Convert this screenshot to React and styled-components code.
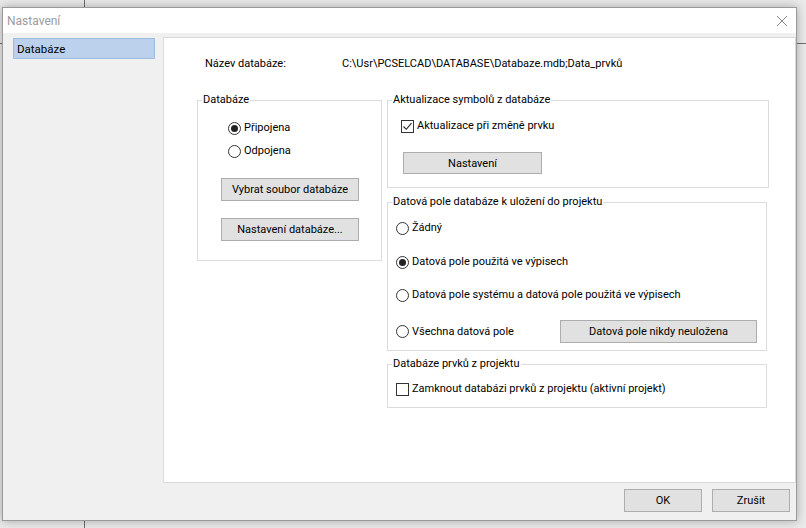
import React from 'react';
import styled, { createGlobalStyle } from 'styled-components';

const FONT = `Roboto, "Noto Sans", "DejaVu Sans", sans-serif`;

const GlobalStyle = createGlobalStyle`
  html, body { margin: 0; padding: 0; }
  body {
    width: 806px;
    height: 528px;
    overflow: hidden;
    background-color: #ebebeb;
    background-image: linear-gradient(#707070, #707070), linear-gradient(#707070, #707070);
    background-size: 1px 100%, 100% 1px;
    background-position: 84px 0, 0 43px;
    background-repeat: no-repeat;
    font-family: ${FONT};
    font-size: 11px;
    color: #000;
  }
`;

const Window = styled.div`
  box-sizing: border-box;
  margin: 7px 0 0 2px;
  width: 795px;
  height: 514px;
  border: 1px solid #9a9a9a;
  background: #f0f0f0;
  box-shadow: 0 0 10px rgba(0, 0, 0, 0.3);
  display: flex;
  flex-direction: column;
`;

const TitleBar = styled.div`
  height: 25px;
  background: #fff;
  display: flex;
  align-items: center;
  justify-content: space-between;
  padding: 0 8px 0 4px;
  color: #9b9b9b;
  font-size: 12px;
`;

const Close = styled.span`
  display: flex;
  width: 12px;
  height: 12px;
`;

const Body = styled.div`
  flex: 1;
  display: grid;
  grid-template-columns: 160px 1fr;
  min-height: 0;
`;

const Sidebar = styled.div`
  padding: 5px 0 0 10px;
`;

const NavItem = styled.div`
  box-sizing: border-box;
  width: 142px;
  height: 21px;
  padding-left: 3px;
  display: flex;
  align-items: center;
  font-size: 11.5px;
  background: ${p => (p.$active ? '#bcd2ec' : 'transparent')};
  border: 1px solid ${p => (p.$active ? '#9ebce0' : 'transparent')};
`;

const Main = styled.div`
  display: flex;
  flex-direction: column;
  padding-top: 4px;
`;

const Panel = styled.div`
  box-sizing: border-box;
  height: 446px;
  background: #fff;
  border: 1px solid #dadada;
  padding: 18px 0 0 33px;
`;

const NameRow = styled.div`
  display: flex;
  line-height: 16px;
  padding-left: 8px;
`;

const NameLabel = styled.span`
  width: 137px;
`;

const Columns = styled.div`
  display: flex;
  gap: 5px;
  margin-top: 28px;
  align-items: flex-start;
`;

const RightColumn = styled.div`
  display: flex;
  flex-direction: column;
`;

const Group = styled.div`
  position: relative;
  box-sizing: border-box;
  width: ${p => p.$w}px;
  height: ${p => p.$h}px;
  margin-top: ${p => p.$mt || 0}px;
  border: 1px solid #dcdcdc;
  padding: ${p => p.$pad};
  display: flex;
  flex-direction: column;
`;

const Legend = styled.span`
  position: absolute;
  top: -9px;
  left: 4px;
  padding: 0 1px;
  background: #fff;
  line-height: 16px;
  white-space: nowrap;
`;

const Option = styled.label`
  display: flex;
  align-items: center;
  gap: 3px;
  line-height: 16px;
  margin-top: ${p => p.$mt || 0}px;
  white-space: nowrap;
`;

const RadioMark = styled.span`
  box-sizing: border-box;
  width: 13px;
  height: 13px;
  border-radius: 50%;
  border: 1px solid #333;
  display: flex;
  align-items: center;
  justify-content: center;
  &::after {
    content: '';
    width: 7px;
    height: 7px;
    border-radius: 50%;
    background: ${p => (p.$on ? '#222' : 'transparent')};
  }
`;

const CheckMark = styled.span`
  box-sizing: border-box;
  width: 13px;
  height: 13px;
  border: 1px solid #333;
  display: flex;
  align-items: center;
  justify-content: center;
`;

const Button = styled.button`
  box-sizing: border-box;
  width: ${p => p.$w}px;
  height: ${p => p.$h || 23}px;
  margin-top: ${p => p.$mt || 0}px;
  margin-left: ${p => p.$ml || 0}px;
  padding: 0;
  background: #e1e1e1;
  border: 1px solid #adadad;
  font-family: ${FONT};
  font-size: 11px;
  color: #000;
  flex-shrink: 0;
`;

const LastRow = styled.div`
  display: flex;
  align-items: center;
  justify-content: space-between;
  margin-top: 17px;
  padding-right: 9px;
`;

const Footer = styled.div`
  display: flex;
  justify-content: flex-end;
  gap: 10px;
  padding: 6px 6px 0 0;
`;

const Radio = ({ on, children, mt }) => (
  <Option $mt={mt}>
    <RadioMark $on={on} />
    {children}
  </Option>
);

const Check = ({ on, children, mt }) => (
  <Option $mt={mt}>
    <CheckMark>
      {on && (
        <svg width="11" height="11" viewBox="0 0 11 11">
          <path d="M1.5 5.5 L4.3 8.3 L9.5 2.2" fill="none" stroke="#222" strokeWidth="1.1" />
        </svg>
      )}
    </CheckMark>
    {children}
  </Option>
);

export default function App() {
  return (
    <>
      <GlobalStyle />
      <Window>
        <TitleBar>
          <span>Nastavení</span>
          <Close>
            <svg width="12" height="12" viewBox="0 0 12 12">
              <path d="M1 1 L11 11 M11 1 L1 11" stroke="#8a8a8a" strokeWidth="1" />
            </svg>
          </Close>
        </TitleBar>
        <Body>
          <Sidebar>
            <NavItem $active>Databáze</NavItem>
          </Sidebar>
          <Main>
            <Panel>
              <NameRow>
                <NameLabel>Název databáze:</NameLabel>
                <span>C:\Usr\PCSELCAD\DATABASE\Databaze.mdb;Data_prvků</span>
              </NameRow>
              <Columns>
                <Group $w={185} $h={161} $pad="19px 0 0 30px">
                  <Legend>Databáze</Legend>
                  <Radio on>Připojena</Radio>
                  <Radio mt={7}>Odpojena</Radio>
                  <Button $w={138} $mt={19} $ml={-7}>Vybrat soubor databáze</Button>
                  <Button $w={138} $mt={17} $ml={-7}>Nastavení databáze...</Button>
                </Group>
                <RightColumn>
                  <Group $w={382} $h={88} $pad="17px 0 0 13px">
                    <Legend>Aktualizace symbolů z databáze</Legend>
                    <Check on>Aktualizace při změně prvku</Check>
                    <Button $w={139} $h={22} $mt={18} $ml={2}>Nastavení</Button>
                  </Group>
                  <Group $w={380} $h={149} $mt={14} $pad="17px 0 0 8px">
                    <Legend>Datová pole databáze k uložení do projektu</Legend>
                    <Radio>Žádný</Radio>
                    <Radio on mt={18}>Datová pole použitá ve výpisech</Radio>
                    <Radio mt={17}>Datová pole systému a datová pole použitá ve výpisech</Radio>
                    <LastRow>
                      <Radio>Všechna datová pole</Radio>
                      <Button $w={197}>Datová pole nikdy neuložena</Button>
                    </LastRow>
                  </Group>
                  <Group $w={380} $h={44} $mt={13} $pad="16px 0 0 8px">
                    <Legend>Databáze prvků z projektu</Legend>
                    <Check>Zamknout databázi prvků z projektu (aktivní projekt)</Check>
                  </Group>
                </RightColumn>
              </Columns>
            </Panel>
            <Footer>
              <Button $w={78}>OK</Button>
              <Button $w={78}>Zrušit</Button>
            </Footer>
          </Main>
        </Body>
      </Window>
    </>
  );
}
